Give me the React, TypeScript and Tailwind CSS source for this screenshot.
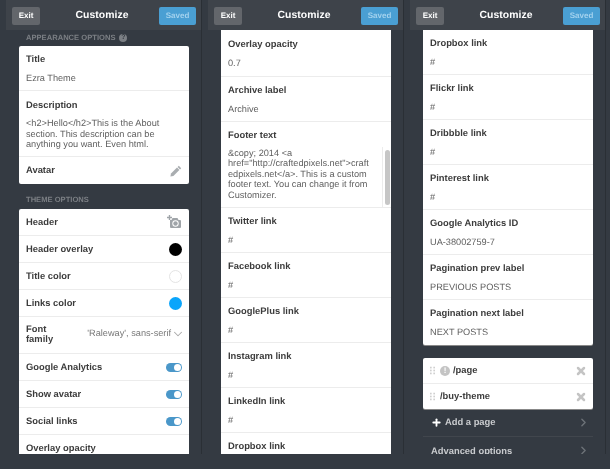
import React from 'react';
import { ChevronDown, ChevronRight, Plus, X } from 'lucide-react';

function Header() {
  return (
    <div className="h-[30px] shrink-0 bg-[#3e434a] flex items-center justify-between pl-[6px] pr-[5px] pt-[1px]">
      <div className="w-[28px] h-[18px] rounded-[2px] bg-[#63666b] text-white text-[8px] font-bold flex items-center justify-center">Exit</div>
      <div className="ml-[5px] text-white text-[10.4px] font-bold tracking-[0.05px]">Customize</div>
      <div className="w-[37px] h-[18px] rounded-[2px] bg-[#4a9fd3] text-[#a3d2ee] text-[8px] font-bold flex items-center justify-center">Saved</div>
    </div>
  );
}

function Panel({ children }: { children: React.ReactNode }) {
  return (
    <div className="w-[196px] h-[454px] mr-[6px] shrink-0 flex flex-col border-r border-[#2a2f35] overflow-hidden">
      <Header />
      <div className="flex-1 overflow-hidden pl-[13px] pr-[12px]">{children}</div>
    </div>
  );
}

function Field({ label, children, last, height = 'h-[45px]' }: { label: string; children: React.ReactNode; last?: boolean; height?: string }) {
  return (
    <div className={`px-[7px] pt-[6px] ${last ? '' : 'border-b border-[#ececec]'} ${height} shrink-0`}>
      <div className="text-[9.4px] leading-[13px] font-bold text-[#3c3c3c]">{label}</div>
      <div className="mt-[7px] text-[9.2px] leading-[13px] text-[#5e5e5e]">{children}</div>
    </div>
  );
}

function Row({ label, children, last }: { label: string; children?: React.ReactNode; last?: boolean }) {
  return (
    <div className={`h-[27px] px-[7px] flex items-center justify-between ${last ? '' : 'border-b border-[#ececec]'}`}>
      <span className="text-[9.4px] font-bold text-[#3c3c3c]">{label}</span>
      {children}
    </div>
  );
}

function Toggle() {
  return (
    <div className="w-[16px] h-[9px] rounded-full bg-[#4a97c9] flex items-center justify-end pr-[1px]">
      <div className="w-[7px] h-[7px] rounded-full bg-white" />
    </div>
  );
}

function Swatch({ className }: { className: string }) {
  return <div className={`w-[13px] h-[13px] rounded-full ${className}`} />;
}

function Grip() {
  return (
    <svg width="5" height="9" viewBox="0 0 6 9" fill="#cfcfcf" className="shrink-0">
      <rect x="0" y="0" width="2" height="2" /><rect x="4" y="0" width="2" height="2" />
      <rect x="0" y="3.5" width="2" height="2" /><rect x="4" y="3.5" width="2" height="2" />
      <rect x="0" y="7" width="2" height="2" /><rect x="4" y="7" width="2" height="2" />
    </svg>
  );
}

function FirstPanel() {
  return (
    <Panel>
      <div className="flex items-center gap-[4px] h-[16px] pl-[7px]">
        <span className="text-[7.6px] font-bold text-[#7b7f84]">APPEARANCE OPTIONS</span>
        <span className="w-[8px] h-[8px] rounded-full bg-[#7b7f84] text-[#343a42] text-[7px] font-bold flex items-center justify-center">?</span>
      </div>
      <div className="bg-white rounded-[2px]">
        <Field label="Title">Ezra Theme</Field>
        <div className="px-[7px] pt-[7px] h-[66px] border-b border-[#ececec]">
          <div className="text-[9.4px] leading-[13px] font-bold text-[#3c3c3c]">Description</div>
          <div className="mt-[7px] text-[9.2px] leading-[10.5px] text-[#5e5e5e]">
            <div>&lt;h2&gt;Hello&lt;/h2&gt;This is the About</div>
            <div>section. This description can be</div>
            <div>anything you want. Even html.</div>
          </div>
        </div>
        <Row label="Avatar" last>
          <svg width="12" height="12" viewBox="0 0 12 12" fill="#a9adb0">
            <path d="M8.8 0.8 11.2 3.2 10 4.4 7.6 2Z" />
            <path d="M7 2.6 9.4 5 3.4 11 0.4 11.6 1 8.6Z" />
          </svg>
        </Row>
      </div>
      <div className="h-[25px] flex items-center pl-[7px] pt-[7px]">
        <span className="text-[7.6px] font-bold text-[#7b7f84]">THEME OPTIONS</span>
      </div>
      <div className="bg-white rounded-t-[2px]">
        <Row label="Header">
          <svg width="15" height="14" viewBox="0 0 15 14" fill="none">
            <path d="M3 5h1.5l1-2h5l1 2H13a1 1 0 0 1 1 1v6a1 1 0 0 1-1 1H4a1 1 0 0 1-1-1Z" fill="#9fa4a8" />
            <circle cx="8.5" cy="8.5" r="3.2" fill="#fff" />
            <circle cx="8.5" cy="8.5" r="2.2" fill="#9fa4a8" />
            <path d="M2.5 0v5M0 2.5h5" stroke="#9fa4a8" strokeWidth="1.4" />
          </svg>
        </Row>
        <Row label="Header overlay"><Swatch className="bg-black" /></Row>
        <Row label="Title color"><Swatch className="bg-white border border-[#e4e4e4]" /></Row>
        <Row label="Links color"><Swatch className="bg-[#0aa5fb]" /></Row>
        <div className="h-[37px] px-[7px] flex items-center justify-between border-b border-[#ececec]">
          <span className="w-[40px] text-[9.4px] leading-[10.5px] font-bold text-[#3c3c3c] -mt-[2px]">Font family</span>
          <span className="flex items-center text-[9.2px] text-[#777] whitespace-nowrap -mr-[3px] -mt-[2px]">
            'Raleway', sans-serif
            <ChevronDown size={14} strokeWidth={1.8} className="text-[#aaa]" />
          </span>
        </div>
        <Row label="Google Analytics"><Toggle /></Row>
        <Row label="Show avatar"><Toggle /></Row>
        <Row label="Social links"><Toggle /></Row>
        <Row label="Overlay opacity" last />
      </div>
    </Panel>
  );
}

function SecondPanel() {
  return (
    <Panel>
      <div className="bg-white pt-[1px]">
        <Field label="Overlay opacity" height="h-[46px]">0.7</Field>
        <Field label="Archive label">Archive</Field>
        <div className="relative px-[7px] pt-[6px] h-[86px] border-b border-[#ececec]">
          <div className="text-[9.4px] leading-[13px] font-bold text-[#3c3c3c]">Footer text</div>
          <div className="mt-[7px] text-[9.2px] leading-[10.4px] text-[#5e5e5e]">
            <div>&amp;copy; 2014 &lt;a</div>
            <div>href="http://craftedpixels.net"&gt;craft</div>
            <div>edpixels.net&lt;/a&gt;. This is a custom</div>
            <div>footer text. You can change it from</div>
            <div>Customizer.</div>
          </div>
          <div className="absolute right-0 top-[25px] bottom-0 w-[9px] border-l border-[#ececec]">
            <div className="ml-[2px] mt-[3px] w-[5px] h-[55px] rounded-full bg-[#c6c6c6]" />
          </div>
        </div>
        {['Twitter', 'Facebook', 'GooglePlus', 'Instagram', 'LinkedIn', 'Dropbox'].map((n) => (
          <Field key={n} label={`${n} link`}>#</Field>
        ))}
      </div>
    </Panel>
  );
}

function ThirdPanel() {
  return (
    <Panel>
      <div className="bg-white rounded-b-[2px] shadow-[0_1px_0_#888]">
        <Field label="Dropbox link">#</Field>
        <Field label="Flickr link">#</Field>
        <Field label="Dribbble link">#</Field>
        <Field label="Pinterest link">#</Field>
        <Field label="Google Analytics ID">UA-38002759-7</Field>
        <Field label="Pagination prev label">PREVIOUS POSTS</Field>
        <Field label="Pagination next label" last>NEXT POSTS</Field>
      </div>
      <div className="mt-[13px] bg-white rounded-[2px] shadow-[0_1px_0_#888]">
        <div className="h-[26px] px-[7px] flex items-center border-b border-[#ececec]">
          <Grip />
          <span className="ml-[5px] w-[10px] h-[10px] rounded-full bg-[#c4c4c4] text-white text-[8px] font-bold flex items-center justify-center">!</span>
          <span className="ml-[3px] flex-1 text-[9.4px] font-bold text-[#3c3c3c]">/page</span>
          <X size={12} strokeWidth={5} className="text-[#c4c4c4] -mr-[1px]" />
        </div>
        <div className="h-[25px] px-[7px] flex items-center">
          <Grip />
          <span className="ml-[5px] flex-1 text-[9.4px] font-bold text-[#3c3c3c]">/buy-theme</span>
          <X size={12} strokeWidth={5} className="text-[#c4c4c4] -mr-[1px]" />
        </div>
      </div>
      <div className="h-[28px] pl-[8px] pr-[7px] flex items-center border-b border-[#41464d] text-[#c9cbce]">
        <Plus size={11} strokeWidth={4} className="text-white" />
        <span className="ml-[3px] flex-1 text-[9.4px] font-bold">Add a page</span>
        <ChevronRight size={13} strokeWidth={2.5} className="text-[#6d7278] -mr-[4px]" />
      </div>
      <div className="h-[28px] pl-[8px] pr-[7px] flex items-start pt-[7px] text-[#c9cbce]">
        <span className="flex-1 text-[9.4px] leading-[13px] font-bold">Advanced options</span>
        <ChevronRight size={13} strokeWidth={2.5} className="text-[#6d7278] -mr-[4px]" />
      </div>
    </Panel>
  );
}

export default function App() {
  return (
    <div className="w-[610px] h-[469px] overflow-hidden bg-[#343a42] flex pl-[6px] font-['Liberation_Sans',Arial,sans-serif] [text-rendering:geometricPrecision] blur-[0.3px]">
      <FirstPanel />
      <SecondPanel />
      <ThirdPanel />
    </div>
  );
}
